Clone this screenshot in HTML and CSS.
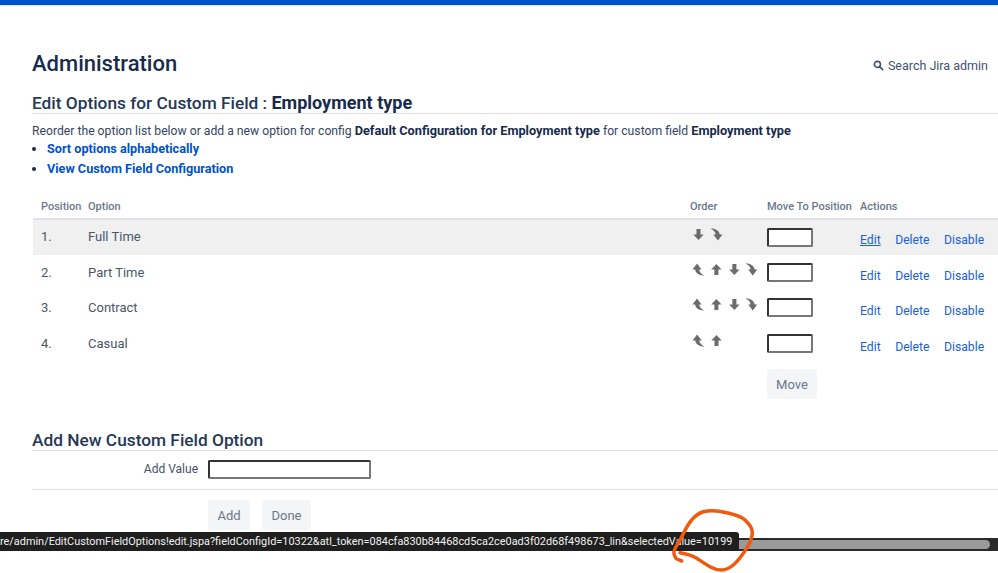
FILE: index.html
```html
<!DOCTYPE html>
<html lang="en">
<head>
<meta charset="utf-8">
<title>Edit Options</title>
<link rel="stylesheet" href="styles.css">
</head>
<body>
<svg class="defs" width="0" height="0" aria-hidden="true">
  <symbol id="down" viewBox="0 0 12 14"><path d="M3.800 1h4.400v6h3.400L6 13 .4 7h3.400z"/></symbol>
  <symbol id="up" viewBox="0 0 12 14"><path d="M3.800 13h4.400V7h3.400L6 1 .4 7h3.400z"/></symbol>
  <symbol id="bottom" viewBox="0 0 14 14"><path d="M.5.5C6 .2 10 3 10.600 7H13.500L8.500 13.500 3.500 7H6C6 4.500 4 2 .5.5z"/></symbol>
  <symbol id="top" viewBox="0 0 14 14"><path d="M13.500 13.500C8 13.800 4 11 3.400 7H.5L5.500.5 10.500 7H8C8 9.500 10 12 13.500 13.500z"/></symbol>
</svg>
<div class="topbar"></div>
<main class="page">
  <header class="adminhead">
    <h1>Administration</h1>
    <a class="search" href="#"><svg class="search-icon" viewBox="0 0 12 12"><circle cx="4.800" cy="4.800" r="3.300"/><path d="M7.300 7.300L11 11"/></svg>Search Jira admin</a>
  </header>
  <h2 class="title">Edit Options for Custom Field : <b>Employment type</b></h2>
  <p class="intro">Reorder the option list below or add a new option for config <b>Default Configuration for Employment type</b> for custom field <b>Employment type</b></p>
  <ul class="links">
    <li><a href="#">Sort options alphabetically</a></li>
    <li><a href="#">View Custom Field Configuration</a></li>
  </ul>
  <table class="options">
    <thead>
      <tr><th class="c-pos">Position</th><th class="c-opt">Option</th><th class="c-ord">Order</th><th class="c-mov">Move To Position</th><th>Actions</th></tr>
    </thead>
    <tbody>
      <tr class="hl">
        <td>1.</td><td>Full Time</td>
        <td class="cell-ar"><div class="arrows"><svg class="ar"><use href="#down"/></svg><svg class="ar"><use href="#bottom"/></svg></div></td>
        <td class="cell-in"><input class="pos" type="text"></td>
        <td class="acts"><a class="under" href="#">Edit</a><a href="#">Delete</a><a href="#">Disable</a></td>
      </tr>
      <tr>
        <td>2.</td><td>Part Time</td>
        <td class="cell-ar"><div class="arrows"><svg class="ar"><use href="#top"/></svg><svg class="ar"><use href="#up"/></svg><svg class="ar"><use href="#down"/></svg><svg class="ar"><use href="#bottom"/></svg></div></td>
        <td class="cell-in"><input class="pos" type="text"></td>
        <td class="acts"><a href="#">Edit</a><a href="#">Delete</a><a href="#">Disable</a></td>
      </tr>
      <tr>
        <td>3.</td><td>Contract</td>
        <td class="cell-ar"><div class="arrows"><svg class="ar"><use href="#top"/></svg><svg class="ar"><use href="#up"/></svg><svg class="ar"><use href="#down"/></svg><svg class="ar"><use href="#bottom"/></svg></div></td>
        <td class="cell-in"><input class="pos" type="text"></td>
        <td class="acts"><a href="#">Edit</a><a href="#">Delete</a><a href="#">Disable</a></td>
      </tr>
      <tr>
        <td>4.</td><td>Casual</td>
        <td class="cell-ar"><div class="arrows"><svg class="ar"><use href="#top"/></svg><svg class="ar"><use href="#up"/></svg></div></td>
        <td class="cell-in"><input class="pos" type="text"></td>
        <td class="acts"><a href="#">Edit</a><a href="#">Delete</a><a href="#">Disable</a></td>
      </tr>
      <tr class="moverow">
        <td></td><td></td><td></td><td class="cell-in"><button class="btn move" type="button">Move</button></td><td></td>
      </tr>
    </tbody>
  </table>
  <h2 class="title addtitle">Add New Custom Field Option</h2>
  <div class="addrow"><label class="addlabel">Add Value</label><input class="addinput" type="text"></div>
  <div class="addbtns"><button class="btn add" type="button">Add</button><button class="btn done" type="button">Done</button></div>
</main>
<div class="scrollbar"><div class="thumb"></div></div>
<div class="status">re/admin/EditCustomFieldOptions!edit.jspa?fieldConfigId=10322&amp;atl_token=084cfa830b84468cd5ca2ce0ad3f02d68f498673_lin&amp;selectedValue=10199</div>
<svg class="scribble" viewBox="0 0 100 73"><path d="M21.700 61C19 60 16.500 59 16 58.300C14.500 56 13.500 54 14 51.700C15 47 18 44 20 40C24 33 27 25 31.700 20C35 16 39 13 43.300 11.700C51 10 60 11 66.700 12.700C74 14.500 81 16 85 20C90 25 92.500 28 92.300 33.300C92 38 90 43 86.700 48.300C83 54 78 61 73.300 65C69 68.500 65 70 61.700 70C57 70 54 69 50 66.700C45 64 41 61 36.700 58.300C31 55 25 53.500 20 52.700"/></svg>
</body>
</html>
```
FILE: styles.css
```css
* { box-sizing: border-box; }
html, body { margin: 0; height: 573px; overflow: hidden; background: #fff; }
body { font-family: Roboto, "Noto Sans", sans-serif; font-size: 12px; color: #172b4d; position: relative; }
a { color: #0052cc; text-decoration: none; }
.defs { position: absolute; }
.topbar { height: 5px; background: #0052cc; box-shadow: 0 1px 1px #dfe6f2; }
.page { padding: 40px 0 0 32px; }
.adminhead { display: flex; justify-content: space-between; align-items: center; height: 38px; }
h1 { margin: 0; font-size: 22px; font-weight: 500; line-height: 38px; color: #172b4d; }
.search { display: flex; align-items: center; gap: 4px; color: #42526e; font-size: 12.500px; padding-right: 10px; padding-top: 3px; }
.search-icon { width: 11px; height: 11px; fill: none; stroke: #42526e; stroke-width: 1.800; }
.title { margin: 8px 0 0; font-size: 17.300px; font-weight: 500; line-height: 24px; height: 23px; border-bottom: 1px solid #dcdfe4; color: #253858; }
.title b { font-size: 18px; font-weight: 700; color: #172b4d; }
.intro { margin: 9px 0 0; font-size: 12.200px; line-height: 16px; color: #344563; white-space: nowrap; }
.intro b { font-size: 12.750px; color: #172b4d; }
.links { margin: 0; padding: 0 0 0 15px; font-size: 12.650px; font-weight: 700; line-height: 20px; }
.links li { height: 20px; }
.options { margin: 17px 0 0 1px; width: 965px; border-collapse: collapse; table-layout: fixed; font-size: 13px; color: #4b5668; }
.options th { height: 23px; padding: 0 0 2px 9px; text-align: left; font-size: 11px; font-weight: 500; color: #6b778c; border-bottom: 2px solid #dfe1e6; white-space: nowrap; }
.options th.c-pos { width: 46px; padding-left: 8px; }
.options th.c-opt { width: 602px; }
.options th.c-ord { width: 77px; }
.options th.c-mov { width: 93px; }
.options td { height: 35.500px; padding: 10px 0 0 9px; vertical-align: top; }
.options td:first-child { padding-left: 8px; }
.options .hl td { padding-top: 9px; }
.options td.cell-ar, .options td.cell-in, .options .hl td.cell-ar, .options .hl td.cell-in { padding-top: 8px; }
.hl td { background: #f0f0f0; }
.arrows { display: flex; gap: 5px; margin-left: 2px; }
.ar { width: 13px; height: 13px; fill: #6c6c6c; }
.pos { display: block; width: 46px; height: 19px; padding: 0; background: #fff; border: 2px solid; border-color: #333 #777 #777 #333; border-radius: 2px; }
.options td.acts { white-space: nowrap; padding-top: 14px; font-size: 12.200px; }
.options .hl td.acts { padding-top: 13px; }
.acts a { color: #1a62d8; margin-right: 14.500px; }
.acts a.under { text-decoration: underline; }
.moverow td { height: 44px; }
.btn { height: 30px; width: 50px; padding: 0; border: 0; border-radius: 3px; background: #f4f5f7; color: #6b778c; font: 13px Roboto, "Noto Sans", sans-serif; }
.btn.add { width: 42px; }
.btn.done { width: 49px; }
.title.addtitle { margin-top: 23px; }
.addrow { display: flex; align-items: center; height: 39px; padding-bottom: 2px; border-bottom: 1px solid #dcdfe4; }
.addlabel { width: 166px; text-align: right; color: #42526e; font-size: 12px; }
.addinput { margin-left: 10px; width: 163px; height: 19px; padding: 0; background: #fff; border: 2px solid; border-color: #333 #777 #777 #333; border-radius: 2px; }
.addbtns { display: flex; gap: 12px; margin: 10px 0 0 176px; }
.status { position: absolute; left: 0; top: 532px; width: 739px; height: 19px; background: #1f1f1f; color: #f2f2f2; font: 10.900px/19px Roboto, "Noto Sans", sans-serif; white-space: nowrap; overflow: hidden; border-radius: 0 3px 3px 0; }
.scrollbar { position: absolute; left: 0; top: 538px; width: 998px; height: 13px; background: #2a2a2a; padding: 2px 8px 2px 0; }
.thumb { height: 9px; background: #9a9a9a; border-radius: 4.500px; }
.scribble { position: absolute; left: 660px; top: 500px; width: 100px; height: 73px; fill: none; stroke: #f0590e; stroke-width: 3.500; stroke-linecap: round; stroke-linejoin: round; }
```
